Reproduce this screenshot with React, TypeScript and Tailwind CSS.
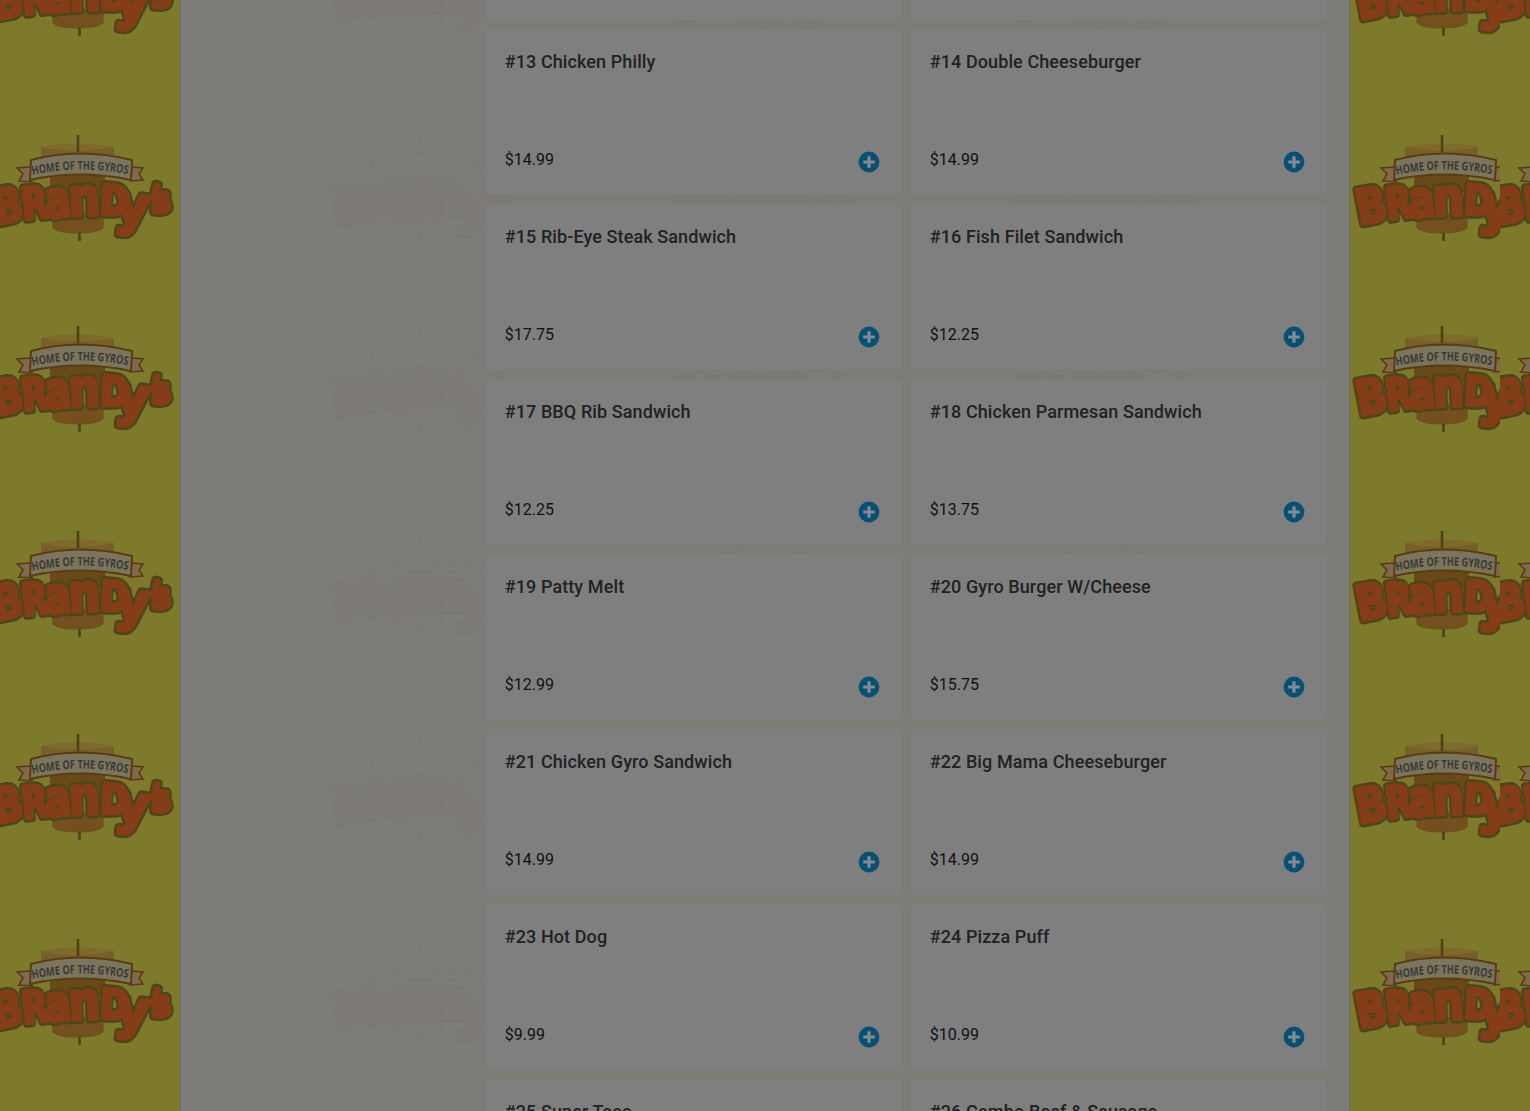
const items = [
  { name: "#13 Chicken Philly", price: "$14.99" },
  { name: "#14 Double Cheeseburger", price: "$14.99" },
  { name: "#15 Rib-Eye Steak Sandwich", price: "$17.75" },
  { name: "#16 Fish Filet Sandwich", price: "$12.25" },
  { name: "#17 BBQ Rib Sandwich", price: "$12.25" },
  { name: "#18 Chicken Parmesan Sandwich", price: "$13.75" },
  { name: "#19 Patty Melt", price: "$12.99" },
  { name: "#20 Gyro Burger W/Cheese", price: "$15.75" },
  { name: "#21 Chicken Gyro Sandwich", price: "$14.99" },
  { name: "#22 Big Mama Cheeseburger", price: "$14.99" },
  { name: "#23 Hot Dog", price: "$9.99" },
  { name: "#24 Pizza Puff", price: "$10.99" },
  { name: "#25 Super Taco", price: "" },
  { name: "#26 Combo Beef & Sausage", price: "" },
]

const rows = [-73, 132, 323, 528, 731, 936]
const columns = [-14, 327, 668, 1009]

// each letter of the wordmark sits at its own angle and size
const letters = [
  { char: "B", x: 9, y: 93, size: 48, sx: 0.84, rotate: -11 },
  { char: "R", x: 37, y: 88, size: 44, sx: 0.78, rotate: -7 },
  { char: "a", x: 60, y: 86, size: 50, sx: 0.76, rotate: -5 },
  { char: "n", x: 83, y: 84, size: 52, sx: 0.84, rotate: -2 },
  { char: "D", x: 113, y: 82, size: 41, sx: 0.86, rotate: 3 },
  { char: "y", x: 128, y: 90, size: 54, sx: 0.96, rotate: 7 },
  { char: "'", x: 162, y: 71, size: 28, sx: 1, rotate: 14 },
  { char: "s", x: 165, y: 81, size: 36, sx: 0.96, rotate: -4 },
]

function Wordmark({ className }: { className: string }) {
  return (
    <g className={className} strokeLinejoin="round" fontFamily="DejaVu Sans, sans-serif" fontWeight="700">
      {letters.map((l) => (
        <text key={l.char} fontSize={l.size} transform={`translate(${l.x} ${l.y}) rotate(${l.rotate}) scale(${l.sx} 1)`}>
          {l.char}
        </text>
      ))}
    </g>
  )
}

function Pattern() {
  return (
    <svg className="absolute inset-0" width="1530" height="1111" aria-hidden="true">
      <defs>
        <path id="ribbon-line" d="M46.5 42.8Q94 32.5 143 42.3" />
        <clipPath id="tile-left">
          <rect width="1500" height="1111" />
        </clipPath>
        <clipPath id="tile-right">
          <rect x="1500" width="30" height="1111" />
        </clipPath>
        <g id="logo">
          <path d="M55 15Q92 8 128 15V32H55Z" fill="#76602a" />
          <path d="M55 15Q92 8 128 15Q92 23 55 15Z" fill="#806a2a" />
          <path d="M64 42H119V60H64Z" fill="#684917" />
          <path d="M67 82H117V96Q111 101 92 101Q72 101 67 96Z" fill="#75501f" stroke="#66501b" />
          <path d="M92 3V20M93.5 101V109" stroke="#4c4418" strokeWidth="2.6" />
          <path d="M45 35L31 36L37 42L33 49L46 50ZM146 35L157 36L153 42L157 48L144 49Z" fill="#80694c" stroke="#5b3b14" strokeWidth="1.6" />
          <path d="M45 28Q93 15 146 28L145 48Q93 37 44 48Z" fill="#7b755e" stroke="#5b3b14" strokeWidth="2" />
          <Wordmark className="fill-[#4b4718] stroke-[#4b4718] stroke-[8.5px]" />
          <Wordmark className="fill-[#853d18] stroke-[#853d18] stroke-[3.5px]" />
          <text className="fill-[#393a35]" fontFamily="Open Sans, sans-serif" fontWeight="700" fontSize="12">
            <textPath href="#ribbon-line" textLength="96" lengthAdjust="spacingAndGlyphs">
              HOME OF THE GYROS
            </textPath>
          </text>
        </g>
      </defs>
      <g clipPath="url(#tile-left)">
        {rows.map((y) => [...columns, 1350].map((x) => <use key={`${x}-${y}`} href="#logo" x={x} y={y} />))}
      </g>
      <g clipPath="url(#tile-right)">
        {rows.map((y) => (
          <use key={y} href="#logo" x="1488" y={y} />
        ))}
      </g>
    </svg>
  )
}

function AddIcon() {
  return (
    <svg className="mt-[2.5px] mr-0.5 h-[22px] w-[22px]" viewBox="0 0 22 22">
      <circle cx="11" cy="11" r="10.4" fill="#064f75" />
      <path d="M11 5.2V16.8M5.2 11H16.8" stroke="#858a8d" strokeWidth="3.2" />
    </svg>
  )
}

function MenuCard({ name, price }: { name?: string; price?: string }) {
  return (
    <article className="flex h-[166px] flex-col justify-between rounded bg-[#7f7f7f] px-5 pt-[21px] pb-[22.5px] shadow-[0_0_2px_rgba(0,0,0,0.06)]">
      {name && <h3 className="-ml-[0.3px] text-lg leading-6 font-medium tracking-[0.1px] text-[#212224]">{name}</h3>}
      {price && (
        <div className="flex items-start justify-between">
          <span className="-ml-[0.3px] text-base leading-6 text-[#111]">{price}</span>
          <AddIcon />
        </div>
      )}
    </article>
  )
}

export default function App() {
  return (
    <div className="relative h-[1111px] w-[1530px] overflow-hidden bg-[#7d7a2c] font-['Roboto',sans-serif]">
      <Pattern />
      <main className="relative mx-auto h-full w-[1170px] overflow-hidden border-x border-[#68686a] bg-[#7c7d7a]/95 pr-[22px] pl-[304px]">
        <div className="-mt-[146px] grid grid-cols-2 gap-x-2 gap-y-[9px]">
          <MenuCard />
          <MenuCard />
          {items.map((item) => (
            <MenuCard key={item.name} {...item} />
          ))}
        </div>
      </main>
    </div>
  )
}
